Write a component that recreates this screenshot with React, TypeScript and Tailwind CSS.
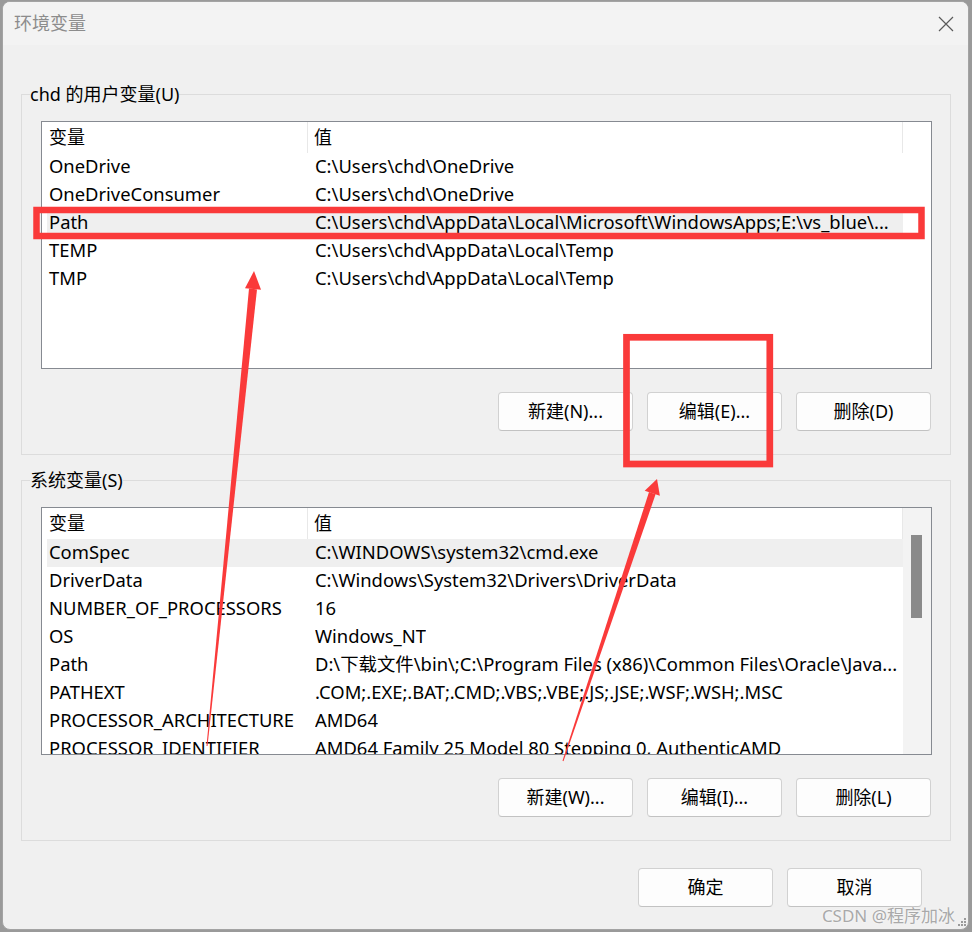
type EnvVar = { name: string; value: string };

const userVars: EnvVar[] = [
  { name: "OneDrive", value: "C:\\Users\\chd\\OneDrive" },
  { name: "OneDriveConsumer", value: "C:\\Users\\chd\\OneDrive" },
  {
    name: "Path",
    value: "C:\\Users\\chd\\AppData\\Local\\Microsoft\\WindowsApps;E:\\vs_blue\\...",
  },
  { name: "TEMP", value: "C:\\Users\\chd\\AppData\\Local\\Temp" },
  { name: "TMP", value: "C:\\Users\\chd\\AppData\\Local\\Temp" },
];

const systemVars: EnvVar[] = [
  { name: "ComSpec", value: "C:\\WINDOWS\\system32\\cmd.exe" },
  { name: "DriverData", value: "C:\\Windows\\System32\\Drivers\\DriverData" },
  { name: "NUMBER_OF_PROCESSORS", value: "16" },
  { name: "OS", value: "Windows_NT" },
  {
    name: "Path",
    value: "D:\\下载文件\\bin\\;C:\\Program Files (x86)\\Common Files\\Oracle\\Java...",
  },
  { name: "PATHEXT", value: ".COM;.EXE;.BAT;.CMD;.VBS;.VBE;.JS;.JSE;.WSF;.WSH;.MSC" },
  { name: "PROCESSOR_ARCHITECTURE", value: "AMD64" },
  { name: "PROCESSOR_IDENTIFIER", value: "AMD64 Family 25 Model 80 Stepping 0, AuthenticAMD" },
];

function WinButton({ label }: { label: string }) {
  return (
    <button
      type="button"
      className="flex h-[39px] w-[135px] items-center justify-center rounded-[4px] border border-[#d1d1d1] border-b-[#c2c2c2] bg-[#fdfdfd] text-[18px] text-black"
    >
      {label}
    </button>
  );
}

function VarList({
  rows,
  selected,
  scroll,
}: {
  rows: EnvVar[];
  selected: number;
  scroll?: boolean;
}) {
  return (
    <div className="ml-[19px] flex h-[248px] w-[891px] overflow-hidden border border-[#868a91] bg-white">
      <div className="flex w-[861px] shrink-0 flex-col">
        <div className="flex h-[31px] shrink-0 items-center text-[18px]">
          <div className="flex h-full w-[266px] items-center border-r border-[#e8e8e8] pl-[7px]">
            变量
          </div>
          <div className="flex h-full w-[595px] items-center border-r border-[#e8e8e8] pl-[6px]">
            值
          </div>
        </div>
        {rows.map((row, index) => (
          <div
            key={row.name + index}
            className={`ml-[5px] flex h-[28px] w-[856px] shrink-0 items-center whitespace-nowrap pb-[2px] text-[18.4px] leading-[26px] ${
              index === selected ? "bg-[#efefef]" : ""
            }`}
          >
            <span className="w-[268px] shrink-0 overflow-hidden pl-[2px]">{row.name}</span>
            <span className="overflow-hidden">{row.value}</span>
          </div>
        ))}
      </div>
      {scroll ? (
        <div className="flex-1 bg-[#f3f3f3] pl-[8px] pt-[27px]">
          <div className="h-[83px] w-[11px] bg-[#8a8a8a]" />
        </div>
      ) : (
        <div className="flex-1" />
      )}
    </div>
  );
}

function VarGroup({
  title,
  rows,
  selected,
  buttons,
  scroll,
  className,
}: {
  title: string;
  rows: EnvVar[];
  selected: number;
  buttons: string[];
  scroll?: boolean;
  className?: string;
}) {
  return (
    <fieldset
      className={`ml-[18px] w-[930px] border border-[#dcdcdc] pb-[23px] ${className ?? ""}`}
    >
      <legend className="ml-[8px] px-0 text-[18px] leading-[24px]">{title}</legend>
      <div className="mt-[15px]">
        <VarList rows={rows} selected={selected} scroll={scroll} />
      </div>
      <div className="mr-[19px] mt-[23px] flex justify-end gap-[14px]">
        {buttons.map((b) => (
          <WinButton key={b} label={b} />
        ))}
      </div>
    </fieldset>
  );
}

function Annotations() {
  return (
    <svg
      className="pointer-events-none absolute left-0 top-0"
      width="972"
      height="932"
      viewBox="0 0 972 932"
    >
      <rect x="36.5" y="210" width="885" height="26" fill="none" stroke="#fa3a3a" strokeWidth="6.5" />
      <rect x="626.5" y="337.3" width="143.3" height="126.7" fill="none" stroke="#fa3a3a" strokeWidth="6.7" />
      <polygon points="249,288.6 257,289.4 207.5,746 206.5,746" fill="#fa3a3a" />
      <polygon points="254,271 245,288.2 261,289.8" fill="#fa3a3a" />
      <polygon points="649,492.1 655.6,494.3 563.5,761.2 562.5,760.8" fill="#fa3a3a" />
      <polygon points="657,479 644.7,490.7 659.9,495.7" fill="#fa3a3a" />
    </svg>
  );
}

export default function App() {
  return (
    <div className="relative h-[932px] w-[972px] overflow-hidden bg-[#9a9a9a] font-['Noto_Sans','Noto_Sans_CJK_SC',sans-serif] text-black">
      <div className="ml-[2px] mt-[1px] flex h-[929px] w-[967px] flex-col overflow-hidden rounded-[8px] border border-[#a3a3a3] bg-[#f0f0f0]">
        <div className="flex h-[43px] shrink-0 items-center justify-between bg-[#f3f3f3] pl-[11px] pr-[14px]">
          <span className="text-[18px] text-[#8c8c8c]">环境变量</span>
          <svg width="16" height="16" viewBox="0 0 16 16">
            <path d="M1 1 L15 15 M15 1 L1 15" stroke="#5a5a5a" strokeWidth="1.2" />
          </svg>
        </div>

        <VarGroup
          className="mt-[37px]"
          title="chd 的用户变量(U)"
          rows={userVars}
          selected={2}
          buttons={["新建(N)...", "编辑(E)...", "删除(D)"]}
        />

        <VarGroup
          className="mt-[13px]"
          title="系统变量(S)"
          rows={systemVars}
          selected={0}
          scroll
          buttons={["新建(W)...", "编辑(I)...", "删除(L)"]}
        />

        <div className="mr-[46px] mt-[27px] flex justify-end gap-[14px]">
          <WinButton label="确定" />
          <WinButton label="取消" />
        </div>
      </div>

      <Annotations />

      <span className="absolute right-[17px] top-[903px] text-[17px] text-[#a9a9a9] [text-shadow:0_0_2px_#ffffff]">
        CSDN @程序加冰
      </span>
      <svg className="absolute left-[957px] top-[917px]" width="10" height="10" viewBox="0 0 10 10">
        <rect x="7" y="1" width="2" height="2" fill="#9a9a9a" />
        <rect x="4" y="4" width="2" height="2" fill="#9a9a9a" />
        <rect x="7" y="4" width="2" height="2" fill="#9a9a9a" />
        <rect x="1" y="7" width="2" height="2" fill="#9a9a9a" />
        <rect x="4" y="7" width="2" height="2" fill="#9a9a9a" />
        <rect x="7" y="7" width="2" height="2" fill="#9a9a9a" />
      </svg>
    </div>
  );
}
